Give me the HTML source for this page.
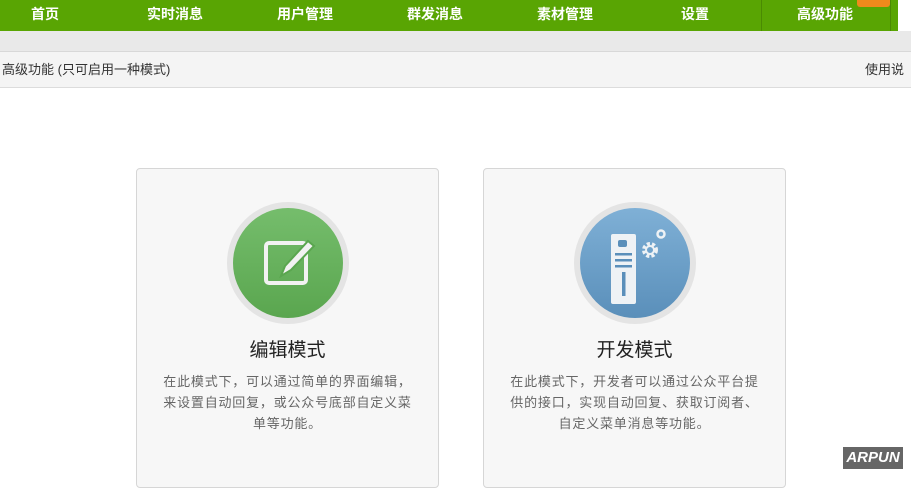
<!DOCTYPE html>
<html><head><meta charset="utf-8"><style>
*{margin:0;padding:0;box-sizing:border-box}
body{width:911px;height:475px;overflow:hidden;background:#fff;font-family:"Liberation Sans","Noto Sans CJK SC",sans-serif;position:relative}
.nav{position:absolute;left:0;top:0;width:898px;height:31px;background:#59a503}
.nav span{position:absolute;top:0;height:31px;line-height:29px;width:130px;text-align:center;color:#fff;font-size:14px;font-weight:bold}
.sep{position:absolute;top:0;width:1px;height:31px;background:#4a8a02}
.new{position:absolute;left:857px;top:0;width:33px;height:7px;background:#f08a1c;border-radius:0 0 3px 3px}
.band1{position:absolute;top:31px;left:0;width:911px;height:21px;background:#e9e9e9;border-bottom:1px solid #d8d8d8}
.band2{position:absolute;top:52px;left:0;width:911px;height:36px;background:#f4f4f4;border-bottom:1px solid #dcdcdc;font-size:13px;color:#333;line-height:36px}
.card{position:absolute;top:168px;width:303px;height:320px;background:#f7f7f7;border:1px solid #d6d6d6;border-radius:4px;text-align:center}
.circ{position:absolute;left:90px;top:33px;width:122px;height:122px;border-radius:50%;background:#e4e4e4}
.in{position:absolute;left:6px;top:6px;width:110px;height:110px;border-radius:50%}
.t{position:absolute;top:166px;left:0;width:100%;font-size:19px;color:#222}
.d{position:absolute;top:202px;left:0;width:100%;font-size:13px;color:#666;line-height:21px;white-space:nowrap;letter-spacing:0.8px}
</style></head><body>
<div class="nav">
<span style="left:-20px">首页</span><span style="left:110px">实时消息</span><span style="left:240px">用户管理</span><span style="left:370px">群发消息</span><span style="left:500px">素材管理</span><span style="left:630px">设置</span><span style="left:760px">高级功能</span>
<div class="sep" style="left:761px"></div><div class="sep" style="left:890px"></div>
</div>
<div class="new"></div>
<div class="band1"></div>
<div class="band2"><span style="position:absolute;left:2px">高级功能 (只可启用一种模式)</span><span style="position:absolute;left:865px">使用说</span></div>
<div class="card" style="left:136px">
<div class="circ"><div class="in" style="background:linear-gradient(#75bd6c,#5aa64f)">
<svg width="110" height="110" viewBox="0 0 110 110"><rect x="33" y="35" width="40" height="40" rx="3" fill="none" stroke="#f2f2f2" stroke-width="4"/><path d="M48 68 L52 58 L75 33 L81 38 L58 62 Z" fill="#f2f2f2" stroke="#5aa64f" stroke-width="2"/></svg>
</div></div>
<div class="t">编辑模式</div>
<div class="d">在此模式下，可以通过简单的界面编辑，<br>来设置自动回复，或公众号底部自定义菜<br>单等功能。</div>
</div>
<div class="card" style="left:483px">
<div class="circ"><div class="in" style="background:linear-gradient(#7fb0d6,#5a8fba)">
<svg width="110" height="110" viewBox="0 0 110 110"><rect x="31" y="26" width="25" height="70" rx="2" fill="#eef2f5"/><rect x="38" y="32" width="9" height="7" rx="2" fill="#5a8fba"/><rect x="35" y="45" width="17" height="2.5" fill="#5a8fba"/><rect x="35" y="51" width="17" height="2.5" fill="#5a8fba"/><rect x="35" y="57" width="17" height="2.5" fill="#5a8fba"/><rect x="42" y="64" width="3.5" height="24" fill="#5a8fba"/><circle cx="70" cy="42" r="6" fill="none" stroke="#eef2f5" stroke-width="4" stroke-dasharray="3 2"/><circle cx="70" cy="42" r="4" fill="none" stroke="#eef2f5" stroke-width="2"/><circle cx="81" cy="26" r="3.5" fill="none" stroke="#eef2f5" stroke-width="2.5"/></svg>
</div></div>
<div class="t">开发模式</div>
<div class="d">在此模式下，开发者可以通过公众平台提<br>供的接口，实现自动回复、获取订阅者、<br>自定义菜单消息等功能。</div>
</div>
<div style="position:absolute;left:843px;top:447px;width:60px;height:22px;background:#666;color:#fff;font-style:italic;font-weight:bold;font-size:15px;line-height:22px;text-align:center">ARPUN</div>
</body></html>
